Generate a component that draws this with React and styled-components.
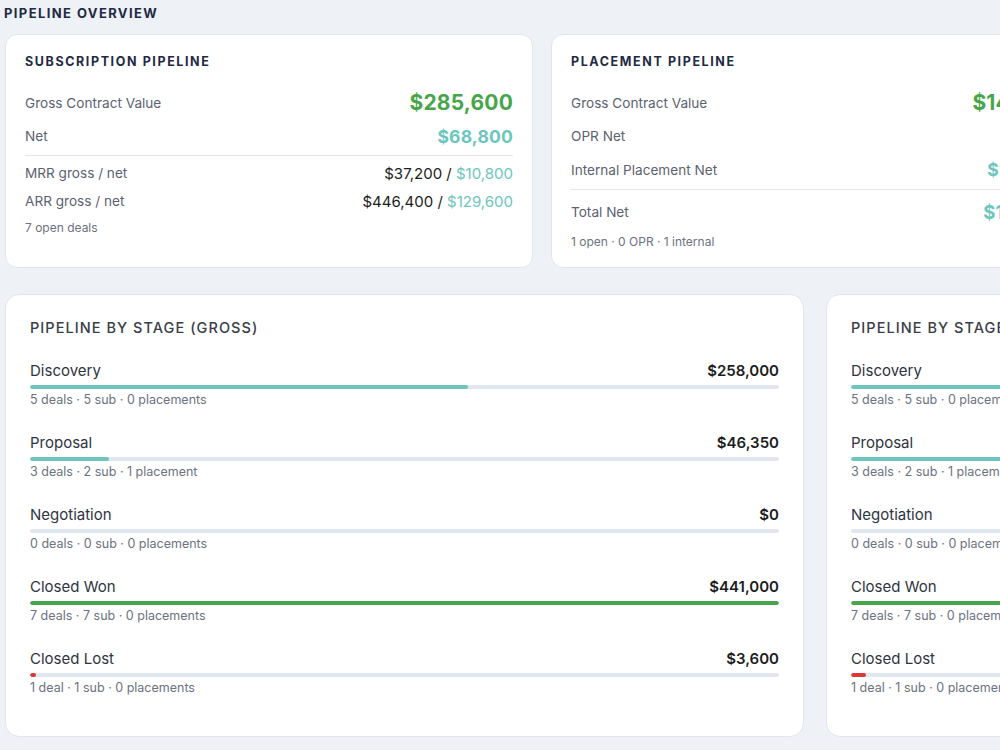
import React from 'react'
import styled, { createGlobalStyle } from 'styled-components'

const GlobalStyle = createGlobalStyle`
  html, body {
    margin: 0;
    padding: 0;
    background: #eef1f6;
    overflow: hidden;
  }
  body {
    font-family: Inter, "Noto Sans", "Liberation Sans", sans-serif;
    color: #2f3440;
  }
`

const colors = {
  green: '#47a64b',
  teal: '#6cc6be',
  red: '#d93a35',
  track: '#e2e6ef',
  border: '#e1e5ed',
  navy: '#1f2a44',
  label: '#5b6270',
  muted: '#6b7280',
  ink: '#1b1d22'
}

const Page = styled.div`
  width: 1620px;
  padding: 0 5px 20px;
`

const SectionTitle = styled.h1`
  margin: 0 0 0 -1px;
  padding-top: 5px;
  height: 29px;
  font-size: 13px;
  line-height: 16px;
  font-weight: 700;
  letter-spacing: 1.4px;
  color: ${colors.navy};
  text-transform: uppercase;
`

const SummaryGrid = styled.div`
  display: grid;
  grid-template-columns: repeat(3, 1fr);
  gap: 18px;
`

const StageGrid = styled.div`
  display: grid;
  grid-template-columns: repeat(2, 1fr);
  gap: 22px;
  margin-top: 26px;
`

const Card = styled.section`
  background: #fff;
  border: 1px solid ${colors.border};
  border-radius: ${(props) => (props.$large ? '14px' : '12px')};
  padding: ${(props) => (props.$large ? '24px 24px 15px' : '20px 19px 17px')};
  display: flex;
  flex-direction: column;
`

const CardTitle = styled.h2`
  margin: 0 0 17px;
  font-size: 12.5px;
  line-height: 14px;
  font-weight: 700;
  letter-spacing: 1.6px;
  color: ${colors.navy};
`

const StageTitle = styled.h2`
  margin: 0 0 24px;
  font-size: 14.5px;
  line-height: 18px;
  font-weight: 500;
  letter-spacing: 1.05px;
  color: #3a3e48;
`

const MetricRow = styled.div`
  display: flex;
  justify-content: space-between;
  align-items: center;
  height: ${(props) => (props.$compact ? '28px' : '33.5px')};
`

const MetricLabel = styled.span`
  font-size: 13.6px;
  color: ${colors.label};
`

const sizes = { lg: '21px', md: '17.5px', total: '18.5px' }

const BigValue = styled.span`
  font-size: ${(props) => sizes[props.$size || 'md']};
  font-weight: 700;
  color: ${(props) => (props.$tone === 'green' ? colors.green : colors.teal)};
  letter-spacing: 0.2px;
`

const PairValue = styled.span`
  font-size: 15px;
  color: ${colors.ink};
`

const NetPart = styled.span`
  color: ${colors.teal};
`

const Divider = styled.hr`
  border: 0;
  border-top: 1px solid ${colors.border};
  margin: 2px 0 ${(props) => (props.$loose ? '6px' : '3px')};
`

const Footnote = styled.div`
  margin-top: 5px;
  font-size: 12px;
  line-height: 16px;
  color: ${colors.muted};
`

const StageRow = styled.div`
  margin-bottom: 25px;
`

const StageHead = styled.div`
  display: flex;
  justify-content: space-between;
  align-items: baseline;
  line-height: 20px;
`

const StageName = styled.span`
  font-size: 15px;
  color: #2f3440;
`

const StageValue = styled.span`
  font-size: 15px;
  font-weight: 600;
  color: ${colors.ink};
`

const Track = styled.div`
  margin-top: 4px;
  height: 4px;
  border-radius: 2px;
  background: ${colors.track};
  overflow: hidden;
`

const Fill = styled.div`
  height: 100%;
  border-radius: 2px;
  background: ${(props) => props.$color};
`

const StageMeta = styled.div`
  margin-top: 3px;
  font-size: 12.5px;
  line-height: 16px;
  color: ${colors.muted};
`

const money = (n) => '$' + n.toLocaleString('en-US')

const plural = (n, word) => `${n} ${word}${n === 1 ? '' : 's'}`

const grossStages = [
  { name: 'Discovery', value: 258000, deals: 5, sub: 5, placements: 0 },
  { name: 'Proposal', value: 46350, deals: 3, sub: 2, placements: 1 },
  { name: 'Negotiation', value: 0, deals: 0, sub: 0, placements: 0 },
  { name: 'Closed Won', value: 441000, deals: 7, sub: 7, placements: 0 },
  { name: 'Closed Lost', value: 3600, deals: 1, sub: 1, placements: 0 }
]

const netStages = [
  { name: 'Discovery', value: 61200, deals: 5, sub: 5, placements: 0 },
  { name: 'Proposal', value: 24750, deals: 3, sub: 2, placements: 1 },
  { name: 'Negotiation', value: 0, deals: 0, sub: 0, placements: 0 },
  { name: 'Closed Won', value: 118800, deals: 7, sub: 7, placements: 0 },
  { name: 'Closed Lost', value: 2400, deals: 1, sub: 1, placements: 0 }
]

function stageColor(name) {
  if (name === 'Closed Won') return colors.green
  if (name === 'Closed Lost') return colors.red
  return colors.teal
}

function StageCard({ title, stages }) {
  const max = Math.max(...stages.map((s) => s.value))
  return (
    <Card $large>
      <StageTitle>{title}</StageTitle>
      {stages.map((s) => (
        <StageRow key={s.name}>
          <StageHead>
            <StageName>{s.name}</StageName>
            <StageValue>{money(s.value)}</StageValue>
          </StageHead>
          <Track>
            <Fill
              $color={stageColor(s.name)}
              style={{ width: `${max ? (s.value / max) * 100 : 0}%` }}
            />
          </Track>
          <StageMeta>
            {plural(s.deals, 'deal')} · {s.sub} sub · {plural(s.placements, 'placement')}
          </StageMeta>
        </StageRow>
      ))}
    </Card>
  )
}

export default function App() {
  return (
    <>
      <GlobalStyle />
      <Page>
        <SectionTitle>Pipeline Overview</SectionTitle>
        <SummaryGrid>
          <Card>
            <CardTitle>SUBSCRIPTION PIPELINE</CardTitle>
            <MetricRow>
              <MetricLabel>Gross Contract Value</MetricLabel>
              <BigValue $size="lg" $tone="green">$285,600</BigValue>
            </MetricRow>
            <MetricRow>
              <MetricLabel>Net</MetricLabel>
              <BigValue>$68,800</BigValue>
            </MetricRow>
            <Divider />
            <MetricRow $compact>
              <MetricLabel>MRR gross / net</MetricLabel>
              <PairValue>
                $37,200 / <NetPart>$10,800</NetPart>
              </PairValue>
            </MetricRow>
            <MetricRow $compact>
              <MetricLabel>ARR gross / net</MetricLabel>
              <PairValue>
                $446,400 / <NetPart>$129,600</NetPart>
              </PairValue>
            </MetricRow>
            <Footnote>7 open deals</Footnote>
          </Card>
          <Card>
            <CardTitle>PLACEMENT PIPELINE</CardTitle>
            <MetricRow>
              <MetricLabel>Gross Contract Value</MetricLabel>
              <BigValue $size="lg" $tone="green">$14,000</BigValue>
            </MetricRow>
            <MetricRow>
              <MetricLabel>OPR Net</MetricLabel>
              <BigValue>$0</BigValue>
            </MetricRow>
            <MetricRow>
              <MetricLabel>Internal Placement Net</MetricLabel>
              <BigValue>$12,600</BigValue>
            </MetricRow>
            <Divider $loose />
            <MetricRow>
              <MetricLabel>Total Net</MetricLabel>
              <BigValue $size="total">$12,600</BigValue>
            </MetricRow>
            <Footnote>1 open · 0 OPR · 1 internal</Footnote>
          </Card>
          <Card>
            <CardTitle>CONVERSION</CardTitle>
            <MetricRow>
              <MetricLabel>Win rate</MetricLabel>
              <BigValue $size="lg" $tone="green">88%</BigValue>
            </MetricRow>
            <MetricRow>
              <MetricLabel>Avg deal size</MetricLabel>
              <BigValue>$40,800</BigValue>
            </MetricRow>
            <Footnote>Last 90 days</Footnote>
          </Card>
        </SummaryGrid>
        <StageGrid>
          <StageCard title="PIPELINE BY STAGE (GROSS)" stages={grossStages} />
          <StageCard title="PIPELINE BY STAGE (NET)" stages={netStages} />
        </StageGrid>
      </Page>
    </>
  )
}
